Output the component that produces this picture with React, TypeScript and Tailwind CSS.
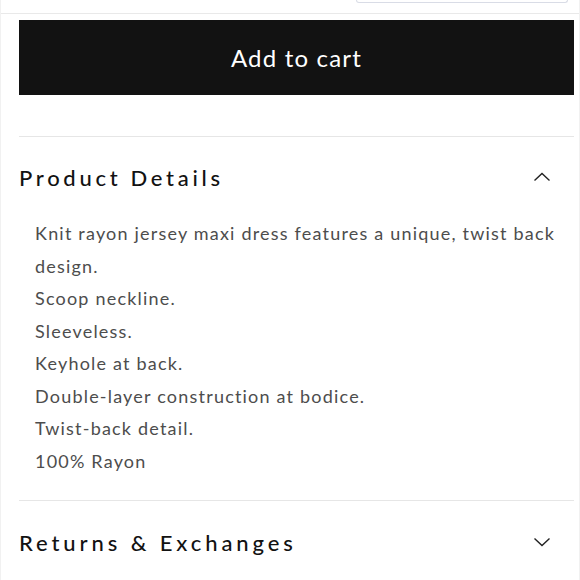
import React from "react"

const details = [
  "Knit rayon jersey maxi dress features a unique, twist back",
  "design.",
  "Scoop neckline.",
  "Sleeveless.",
  "Keyhole at back.",
  "Double-layer construction at bodice.",
  "Twist-back detail.",
  "100% Rayon",
]

function Chevron({ up }: { up?: boolean }) {
  return (
    <svg width="18" height="10" viewBox="0 0 18 10" fill="none" className="mr-[23px]">
      <path
        d={up ? "M1.5 8.5L9 1.5L16.5 8.5" : "M1.5 1.5L9 8.5L16.5 1.5"}
        stroke="#222"
        strokeWidth="1.4"
      />
    </svg>
  )
}

export default function App() {
  return (
    <div className="w-[580px] h-[580px] overflow-hidden bg-white border-x border-[#f1f1f1] font-['Lato',sans-serif]">
      <div className="ml-auto mr-[11px] h-[3px] w-[212px] rounded-b-md border-x border-b border-[#d9dce6]" />
      <div className="mt-[10px] h-px bg-[#e9e9e9]" />

      <div className="pl-[18px] pr-[5px]">
        <button className="mt-[6px] h-[75px] w-full bg-[#121212] text-[24px] tracking-[1.2px] text-white">
          Add to cart
        </button>

        <div className="mt-[41px] h-px bg-[#e6e6e6]" />

        <div className="flex h-[80px] items-center justify-between">
          <h2 className="text-[22px] font-medium tracking-[3.7px] text-[#121212]">Product Details</h2>
          <Chevron up />
        </div>

        <div className="whitespace-nowrap pl-[16px] text-[18px] leading-[32.5px] tracking-[1.2px] text-[#4d4d4d]">
          {details.map((line) => (
            <p key={line}>{line}</p>
          ))}
        </div>

        <div className="mt-[23px] h-px bg-[#e6e6e6]" />

        <div className="flex h-[82px] items-center justify-between">
          <h2 className="text-[22px] font-medium tracking-[3.9px] text-[#121212]">Returns &amp; Exchanges</h2>
          <Chevron />
        </div>
      </div>
    </div>
  )
}
